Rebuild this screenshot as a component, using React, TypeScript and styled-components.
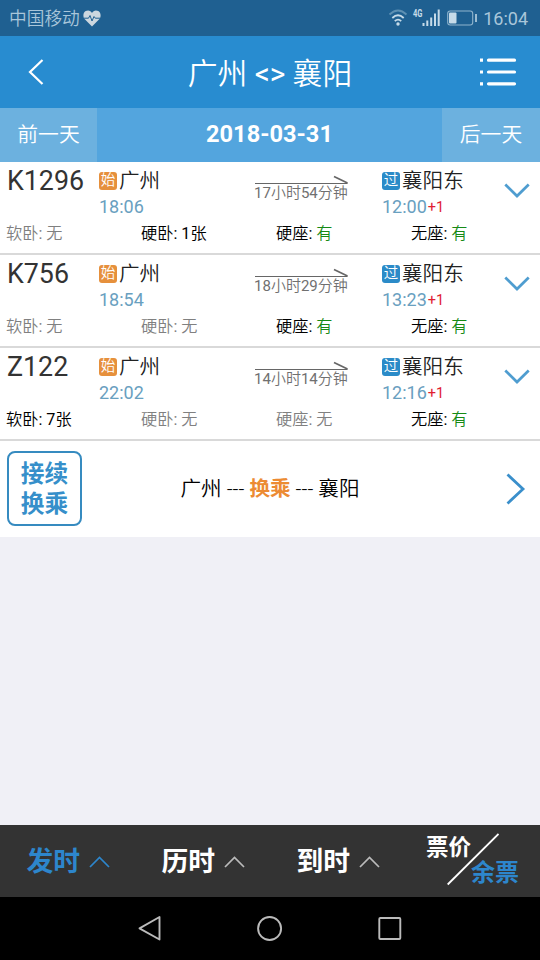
import React from "react";
import styled, { createGlobalStyle } from "styled-components";

const blue = "#288cd0";

const GlobalStyle = createGlobalStyle`
  * { box-sizing: border-box; }
  body {
    margin: 0;
    background: #f0f0f6;
    font-family: Roboto, "Noto Sans CJK SC", sans-serif;
  }
`;

const Screen = styled.div`
  width: 540px;
  height: 960px;
  display: flex;
  flex-direction: column;
  overflow: hidden;
  background: #f0f0f6;
  white-space: nowrap;
`;

const StatusBar = styled.div`
  height: 36px;
  flex: none;
  display: flex;
  align-items: center;
  justify-content: space-between;
  padding: 0 12px 0 9px;
  background: #1f6091;
  color: #a9c6da;
`;

const StatusGroup = styled.div`
  display: flex;
  align-items: center;
`;

const Carrier = styled.span`
  font-size: 17.7px;
  font-weight: 350;
  line-height: 36px;
  padding-top: 2px;
  margin-right: 3px;
`;

const Clock = styled.span`
  font-size: 18px;
  line-height: 36px;
  padding-top: 1px;
  margin-left: 5px;
`;

const Header = styled.header`
  height: 72px;
  flex: none;
  display: grid;
  grid-template-columns: 72px 1fr 72px;
  align-items: center;
  background: ${blue};
  color: #fff;
`;

const HeaderButton = styled.button`
  height: 72px;
  padding: 0;
  border: 0;
  background: none;
  display: flex;
  align-items: center;
  justify-content: center;
`;

const MenuButton = styled(HeaderButton)`
  justify-content: flex-start;
  padding-left: 11px;
`;

const Title = styled.h1`
  margin: 0;
  padding-top: 3px;
  font-size: 29.8px;
  font-weight: 350;
  line-height: 69px;
  text-align: center;
`;

const Angles = styled.span`
  font-weight: 400;
`;

const DateBar = styled.div`
  height: 54px;
  flex: none;
  display: grid;
  grid-template-columns: 97px 1fr 98px;
  background: #53a5de;
  color: #fff;
`;

const DayButton = styled.button`
  border: 0;
  padding: 0;
  background: #6cb1df;
  color: #fff;
  font-family: inherit;
  font-size: 20.8px;
  font-weight: 350;
  line-height: 52px;
`;

const CurrentDate = styled.div`
  font-size: 23.6px;
  font-weight: 700;
  line-height: 52px;
  text-align: center;
`;

const TrainCard = styled.section`
  height: 93px;
  flex: none;
  border-bottom: 2px solid #d9d9d9;
  background: #fff;
`;

const TrainMain = styled.div`
  height: 58px;
  display: grid;
  grid-template-columns: 99px 155px 128px 109px 49px;
`;

const TrainNumber = styled.div`
  padding-left: 7px;
  font-size: 26.8px;
  line-height: 38px;
  color: #333;
`;

const Station = styled.div`
  height: 34px;
  display: flex;
  align-items: center;
  gap: 2px;
  padding-top: 3px;
  font-size: 20.6px;
  font-weight: 350;
  line-height: 30px;
  color: #222;
`;

const Badge = styled.span<{ $color: string }>`
  width: 18px;
  height: 18px;
  border-radius: 3px;
  background: ${(p) => p.$color};
  color: #fff;
  font-size: 14.5px;
  line-height: 18px;
  text-align: center;
`;

const Time = styled.div`
  font-size: 18px;
  line-height: 22px;
  color: #69a0c0;
`;

const NextDay = styled.span`
  margin-left: 1px;
  font-size: 14.5px;
  position: relative;
  top: -1px;
  color: #e02030;
`;

const Duration = styled.div`
  padding-top: 13px;
  font-size: 15px;
  font-weight: 350;
  line-height: 18px;
  color: #707070;
`;

const Digits = styled.span`
  font-weight: 400;
`;

const ArrowLine = styled.svg`
  display: block;
  margin-bottom: -1px;
`;

const Expand = styled.div`
  padding: 21px 0 0 13px;
`;

const Seats = styled.div`
  display: grid;
  grid-template-columns: repeat(4, 135px);
  padding: 1px 0 0 6px;
  font-size: 16.2px;
  font-weight: 350;
  line-height: 26px;
`;

const Seat = styled.span<{ $none: boolean }>`
  color: ${(p) => (p.$none ? "#808080" : "#000")};
`;

const Available = styled.span`
  color: #168a16;
`;

const Transfer = styled.section`
  height: 96px;
  flex: none;
  display: grid;
  grid-template-columns: 82px 1fr 68px;
  align-items: center;
  padding-left: 7px;
  background: #fff;
`;

const TransferBox = styled.div`
  width: 75px;
  height: 75px;
  margin-bottom: 1px;
  padding-top: 6px;
  border: 2px solid #368bc0;
  border-radius: 8px;
  color: #368fca;
  font-size: 23.7px;
  font-weight: 700;
  line-height: 30px;
  text-align: center;
`;

const TransferRoute = styled.div`
  padding-right: 21px;
  font-size: 20.6px;
  font-weight: 350;
  line-height: 30px;
  text-align: center;
`;

const Dashes = styled.span`
  margin: 0 5px;
`;

const Via = styled.b`
  font-weight: 700;
  color: #ec8b33;
`;

const Spacer = styled.div`
  flex: 1;
`;

const TabBar = styled.nav`
  height: 72px;
  flex: none;
  display: grid;
  grid-template-columns: repeat(4, 135px);
  background: #333;
`;

const SortTab = styled.div<{ $active?: boolean }>`
  display: flex;
  align-items: center;
  gap: 9px;
  padding-left: 26.5px;
  color: ${(p) => (p.$active ? "#2d86cc" : "#fff")};
  font-size: 26.8px;
  font-weight: 700;
  line-height: 70px;
`;

const TabText = styled.span`
  padding-top: 2px;
`;

const PriceTab = styled.div`
  position: relative;
  font-weight: 700;
  line-height: 28px;
`;

const PriceLabel = styled.span`
  position: absolute;
  left: 21px;
  top: 8px;
  font-size: 22.5px;
  color: #fff;
`;

const TicketsLabel = styled.span`
  position: absolute;
  left: 66px;
  top: 34px;
  font-size: 24px;
  color: #2d86cc;
`;

const Slash = styled.svg`
  position: absolute;
  left: 42px;
  top: 8px;
`;

const NavBar = styled.div`
  height: 63px;
  flex: none;
  display: flex;
  align-items: center;
  justify-content: center;
  gap: 90px;
  background: #000;
`;

type Train = {
  no: string;
  dep: string;
  arr: string;
  duration: [string, string];
  seats: [string, string][];
};

const trains: Train[] = [
  { no: "K1296", dep: "18:06", arr: "12:00", duration: ["17", "54"], seats: [["软卧", "无"], ["硬卧", "1张"], ["硬座", "有"], ["无座", "有"]] },
  { no: "K756", dep: "18:54", arr: "13:23", duration: ["18", "29"], seats: [["软卧", "无"], ["硬卧", "无"], ["硬座", "有"], ["无座", "有"]] },
  { no: "Z122", dep: "22:02", arr: "12:16", duration: ["14", "14"], seats: [["软卧", "7张"], ["硬卧", "无"], ["硬座", "无"], ["无座", "有"]] },
];

function SeatCount({ left }: { left: string }) {
  if (left === "有") return <Available>有</Available>;
  if (left === "无") return <>无</>;
  return <><Digits>{left.slice(0, -1)}</Digits>{left.slice(-1)}</>;
}

function TrainRow({ train }: { train: Train }) {
  const [hours, minutes] = train.duration;
  return (
    <TrainCard>
      <TrainMain>
        <TrainNumber>{train.no}</TrainNumber>
        <div>
          <Station><Badge $color="#e6903c">始</Badge>广州</Station>
          <Time>{train.dep}</Time>
        </div>
        <Duration>
          <ArrowLine width="96" height="10" viewBox="0 0 96 10" fill="none" stroke="#666">
            <path d="M1 8.5H93.5" strokeWidth="1.2" />
            <path d="M80 1.5L93.5 8" strokeWidth="1.7" />
          </ArrowLine>
          <Digits>{hours}</Digits>小时<Digits>{minutes}</Digits>分钟
        </Duration>
        <div>
          <Station><Badge $color="#2b8bc8">过</Badge>襄阳东</Station>
          <Time>{train.arr}<NextDay>+1</NextDay></Time>
        </div>
        <Expand>
          <svg width="26" height="16" viewBox="0 0 26 16" fill="none" stroke="#4f9dd0" strokeWidth="2.7">
            <path d="M1.3 1.5L13 13L24.7 1.5" />
          </svg>
        </Expand>
      </TrainMain>
      <Seats>
        {train.seats.map(([kind, left]) => (
          <Seat key={kind} $none={left === "无"}>
            {kind}<Digits>: </Digits><SeatCount left={left} />
          </Seat>
        ))}
      </Seats>
    </TrainCard>
  );
}

function Caret({ color }: { color: string }) {
  return (
    <svg width="21" height="13" viewBox="0 0 21 13" fill="none" stroke={color} strokeWidth="1.7">
      <path d="M1 12L10.5 2.5L20 12" />
    </svg>
  );
}

export default function App() {
  return (
    <>
      <GlobalStyle />
      <Screen>
        <StatusBar>
          <StatusGroup>
            <Carrier>中国移动</Carrier>
            <svg width="18" height="17" viewBox="0 0 18 17">
              <path d="M9 16.5L1.8 9.2C-.5 6.5.2 2.5 2.7 1.1 5-.3 7.8.5 9 2.9 10.2.5 13-.3 15.3 1.1 17.8 2.5 18.5 6.5 16.2 9.2Z" fill="#ccd7df" />
              <path d="M1 8.2H5.5L7 5.5L9 11L11 6.5L12.3 8.2H17" fill="none" stroke="#1f6091" strokeWidth="1" />
            </svg>
          </StatusGroup>
          <StatusGroup>
            <svg width="90" height="22" viewBox="0 0 90 22" fill="none" stroke="#c6dbe9">
              <path d="M1.5 7.5Q10 -.5 18.5 7.5" stroke="#5d90b3" strokeWidth="1.8" />
              <path d="M4.3 11Q10 5.5 15.7 11M6.8 14.2Q10 11 13.2 14.2" strokeWidth="1.8" />
              <circle cx="10" cy="17" r="1.7" fill="#c6dbe9" stroke="none" />
              <path d="M35.5 19V16M39.3 19V13.5M43.2 19V10.5M47 19V6.5M50.7 19V2.5" strokeWidth="2" />
              <text x="25" y="10" fill="#c6dbe9" stroke="none" fontSize="10" fontWeight="700" textLength="9.5" lengthAdjust="spacingAndGlyphs">4G</text>
              <rect x="59.7" y="4" width="25" height="14" rx="2.5" stroke="#8fb4cd" strokeWidth="1.1" />
              <rect x="61" y="5.5" width="7.5" height="11" rx="1" fill="#c6dbe9" stroke="none" />
              <path d="M88 7V15" strokeWidth="1.5" />
            </svg>
            <Clock>16:04</Clock>
          </StatusGroup>
        </StatusBar>
        <Header>
          <HeaderButton aria-label="back">
            <svg width="18" height="28" viewBox="0 0 18 28" fill="none" stroke="#fff" strokeWidth="2.2">
              <path d="M15.5 2L3 14L15.5 26" />
            </svg>
          </HeaderButton>
          <Title>广州 <Angles>&lt;&gt;</Angles> 襄阳</Title>
          <MenuButton aria-label="menu">
            <svg width="38" height="30" viewBox="0 0 38 30" fill="none" stroke="#fff" strokeWidth="3.2">
              <path d="M1 3.2H4M1 15H4M1 26.8H4" />
              <path d="M9.5 3.2H35.5M9.5 15H35.5M9.5 26.8H35.5" strokeLinecap="round" />
            </svg>
          </MenuButton>
        </Header>
        <DateBar>
          <DayButton>前一天</DayButton>
          <CurrentDate>2018-03-31</CurrentDate>
          <DayButton>后一天</DayButton>
        </DateBar>
        {trains.map((t) => <TrainRow key={t.no} train={t} />)}
        <Transfer>
          <TransferBox>接续<br />换乘</TransferBox>
          <TransferRoute>广州<Dashes>---</Dashes><Via>换乘</Via><Dashes>---</Dashes>襄阳</TransferRoute>
          <svg width="68" height="32" viewBox="0 0 68 32" fill="none" stroke="#3a8fcb" strokeWidth="2.8">
            <path d="M35.5 1.5L51 16L35.5 30.5" />
          </svg>
        </Transfer>
        <Spacer />
        <TabBar>
          <SortTab $active><TabText>发时</TabText><Caret color="#2d86cc" /></SortTab>
          <SortTab><TabText>历时</TabText><Caret color="#bbb" /></SortTab>
          <SortTab><TabText>到时</TabText><Caret color="#bbb" /></SortTab>
          <PriceTab>
            <PriceLabel>票价</PriceLabel>
            <Slash width="52" height="54" viewBox="0 0 52 54" stroke="#fff" strokeWidth="1.8">
              <path d="M.7 51.5L51.5 1" />
            </Slash>
            <TicketsLabel>余票</TicketsLabel>
          </PriceTab>
        </TabBar>
        <NavBar>
          <svg width="30" height="30" viewBox="0 0 30 30" fill="none" stroke="#bbb" strokeWidth="1.9" strokeLinejoin="round">
            <path d="M24.5 3V25.5L4.5 14.3Z" />
          </svg>
          <svg width="30" height="30" viewBox="0 0 30 30" fill="none" stroke="#bbb" strokeWidth="1.9">
            <circle cx="14.6" cy="14.5" r="11.5" />
          </svg>
          <svg width="30" height="30" viewBox="0 0 30 30" fill="none" stroke="#bbb" strokeWidth="1.9">
            <rect x="4.3" y="4" width="21" height="21" rx="1" />
          </svg>
        </NavBar>
      </Screen>
    </>
  );
}
